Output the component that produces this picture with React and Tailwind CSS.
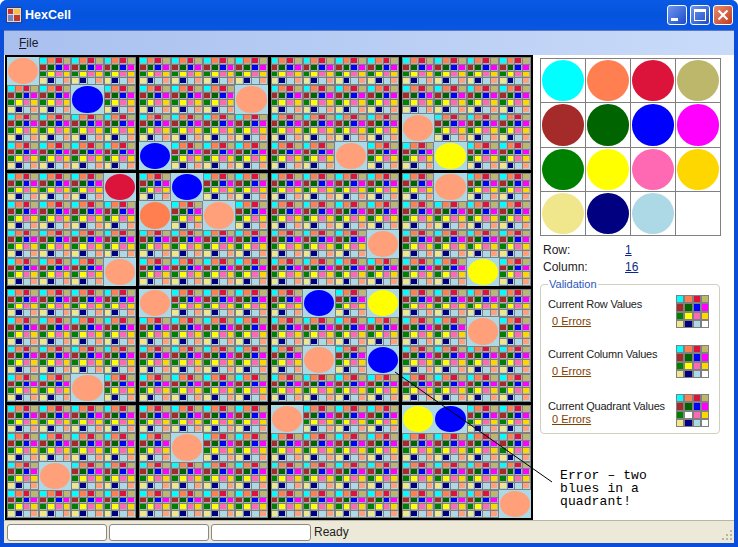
import React from "react";

const PALETTE = [
  "#00ffff", "#ff7f50", "#dc143c", "#bdb76b",
  "#a52a2a", "#006400", "#0000ff", "#ff00ff",
  "#008000", "#ffff00", "#ff69b4", "#ffd700",
  "#f0e68c", "#000080", "#add8e6", "#ffffff",
];

// the board uses light salmon where the palette shows its empty white slot
const SWATCHES = [...PALETTE.slice(0, 15), "#ffa07a"];

const S = "#ffa07a";
const B = "#0000ff";
const Y = "#ffff00";

const PLACED = {
  "0,0": S, "1,2": B, "1,7": S, "2,12": S, "3,4": B, "3,10": S, "3,13": Y,
  "4,3": "#dc143c", "4,5": B, "4,13": S, "5,4": "#ff7f50", "5,6": S,
  "6,11": S, "7,3": S, "7,14": Y, "8,4": S, "8,9": B, "8,11": Y,
  "9,14": S, "10,9": S, "10,11": B, "11,2": S, "12,8": S, "12,12": Y,
  "12,13": B, "13,5": S, "14,1": S, "15,15": S,
};

function Cell({ color }) {
  if (color) {
    return (
      <div className="bg-[#add8e6] p-px flex">
        <div className="flex-1 rounded-[50%]" style={{ backgroundColor: color }} />
      </div>
    );
  }
  return (
    <div className="grid grid-cols-4 grid-rows-4 gap-px bg-[#808080] p-px">
      {SWATCHES.map((c, i) => (
        <div key={i} className={`pr-px pb-px flex ${i > 11 ? "bg-[#add8e6]" : "bg-[#a8b2b6]"}`}>
          <div className="flex-1" style={{ backgroundColor: c }} />
        </div>
      ))}
    </div>
  );
}

function Quadrant({ qr, qc }) {
  const cells = [];
  for (let r = 0; r < 4; r++) {
    for (let c = 0; c < 4; c++) {
      cells.push(<Cell key={c + r * 4} color={PLACED[`${qr * 4 + r},${qc * 4 + c}`]} />);
    }
  }
  return <div className="grid grid-cols-4 grid-rows-4 min-w-0 min-h-0">{cells}</div>;
}

function Board() {
  const quads = [];
  for (let qr = 0; qr < 4; qr++) {
    for (let qc = 0; qc < 4; qc++) {
      quads.push(<Quadrant key={`${qr}-${qc}`} qr={qr} qc={qc} />);
    }
  }
  return (
    <div className="w-[528px] h-[465px] shrink-0 grid grid-cols-4 grid-rows-4 gap-[3px] p-[2px] bg-black">
      {quads}
    </div>
  );
}

function Palette() {
  return (
    <div className="grid grid-cols-4 w-[181px] h-[178px] border-t border-l border-[#808080]">
      {PALETTE.map((c, i) => (
        <div key={i} className="border-r border-b border-[#808080] p-px flex">
          <div className="flex-1 rounded-[50%]" style={{ backgroundColor: c }} />
        </div>
      ))}
    </div>
  );
}

function MiniPalette({ missing = [] }) {
  return (
    <div className="grid grid-cols-4 gap-[2px] w-[33px] h-[33px] p-px bg-[#808080] shrink-0">
      {PALETTE.map((c, i) => (
        <div key={i} style={{ backgroundColor: missing.includes(i) ? "#ffffff" : c }} />
      ))}
    </div>
  );
}

function Check({ title, missing, className, titleClass, errorsClass }) {
  return (
    <div className={`flex justify-between text-[11px] ${className}`}>
      <div className={titleClass}>
        <div className="leading-[14px] tracking-[-0.2px] whitespace-nowrap">{title}</div>
        <a className={`block ml-1 leading-[14px] underline text-[#804000] ${errorsClass}`}>0 Errors</a>
      </div>
      <MiniPalette missing={missing} />
    </div>
  );
}

function WindowButton({ close, children }) {
  return (
    <div
      className={`w-[20px] h-[20px] rounded-[3px] border border-white flex items-center justify-center ${
        close ? "bg-gradient-to-br from-[#e88a6c] to-[#c2381a]" : "bg-gradient-to-br from-[#6f96ee] to-[#1f49c8]"
      }`}
    >
      {children}
    </div>
  );
}

export default function App() {
  return (
    <div className="relative w-[738px] h-[547px] overflow-hidden flex flex-col bg-[#0a4ddb] rounded-t-[7px] text-[12px] text-[#222] font-['Liberation_Sans',sans-serif]">
      {/* TITLE BAR */}
      <div className="h-[30px] shrink-0 flex items-center pl-[6px] pr-[5px] bg-gradient-to-b from-[#0a5ae6] via-[#0453dd] to-[#0a56e2]">
        <svg width="16" height="16" viewBox="0 0 16 16" className="mr-[3px] shrink-0">
          <rect x="0.5" y="0.5" width="15" height="15" fill="#d8d8e8" stroke="#3a3a70" />
          <rect x="2" y="2" width="5" height="5" fill="#c0392b" />
          <rect x="8" y="2" width="6" height="5" fill="#f5c542" />
          <rect x="2" y="8" width="5" height="6" fill="#7a86b8" />
          <rect x="8" y="8" width="6" height="6" fill="#c0392b" />
        </svg>
        <span className="text-white font-bold text-[12.5px]">HexCell</span>
        <div className="ml-auto flex gap-[3px]">
          <WindowButton>
            <div className="w-[7px] h-[3px] bg-white mt-[9px] mr-[5px]" />
          </WindowButton>
          <WindowButton>
            <div className="w-[12px] h-[12px] border border-t-[3px] border-white" />
          </WindowButton>
          <WindowButton close>
            <svg width="12" height="12" viewBox="0 0 12 12">
              <path d="M1.5 1.5 L10.5 10.5 M10.5 1.5 L1.5 10.5" stroke="#fff" strokeWidth="2.2" />
            </svg>
          </WindowButton>
        </div>
      </div>

      <div className="flex-1 min-h-0 mx-[4px] mb-[4px] flex flex-col bg-white">
        {/* MENU */}
        <div className="h-[25px] shrink-0 flex items-center pl-[15px] bg-gradient-to-r from-[#a9c0ef] to-[#c9dbf9] border-t border-[#5a7bc0]">
          <span className="text-[#1a1a2a]"><span className="underline">F</span>ile</span>
        </div>

        {/* BODY */}
        <div className="flex-1 min-h-0 flex pl-px">
          <Board />
          <div className="flex-1 min-w-0 flex flex-col pl-[7px] pt-[3px]">
            <Palette />
            <div className="grid grid-cols-[82px_auto] justify-start pl-[3px] mt-[6px] leading-[17px]">
              <span>Row:</span>
              <a className="underline text-[#0a2a8a]">1</a>
              <span>Column:</span>
              <a className="underline text-[#0a2a8a]">16</a>
            </div>

            <fieldset className="mt-[2px] w-[180px] h-[156px] border border-[#d0d0bf] rounded-[4px] pl-[7px] pr-[10px] pt-[4px]">
              <legend className="px-[1px] text-[11px] text-[#2a56b8] leading-[13px]">Validation</legend>
              <Check title="Current Row Values" className="h-[50px]" titleClass="mt-[2px]" errorsClass="mt-[3px]" />
              <Check title="Current Column Values" className="h-[48px]" titleClass="mt-[2px]" errorsClass="mt-[3px]" />
              <Check title="Current Quadrant Values" missing={[9]} className="h-[44px] pt-px" titleClass="mt-[5px]" errorsClass="-mt-px" />
            </fieldset>

            <div className="mt-[35px] ml-[20px] font-['Liberation_Mono',monospace] text-[13px] tracking-[0.1px] leading-[13px] text-black">
              Error – two<br />blues in a<br />quadrant!
            </div>
          </div>
        </div>

        {/* STATUS BAR */}
        <div className="h-[23px] shrink-0 flex items-center gap-[2px] pl-[3px] bg-[#ece9d8] border-t border-[#b8b6a8] relative">
          <div className="w-[100px] h-[17px] bg-white border border-[#8a8a80] rounded-[3px]" />
          <div className="w-[100px] h-[17px] bg-white border border-[#8a8a80] rounded-[3px]" />
          <div className="w-[100px] h-[17px] bg-white border border-[#8a8a80] rounded-[3px]" />
          <span className="ml-[1px]">Ready</span>
          <svg width="12" height="12" viewBox="0 0 12 12" className="absolute right-[1px] bottom-[2px]">
            {[[9, 1], [5, 5], [9, 5], [1, 9], [5, 9], [9, 9]].map(([x, y], i) => (
              <rect key={i} x={x} y={y} width="2" height="2" fill="#b8b6a0" />
            ))}
          </svg>
        </div>
      </div>

      {/* annotation line drawn over the board */}
      <svg className="absolute left-0 top-0 pointer-events-none" width="738" height="547">
        <line x1="395" y1="372" x2="552" y2="482" stroke="#000" strokeWidth="1" />
      </svg>
    </div>
  );
}
